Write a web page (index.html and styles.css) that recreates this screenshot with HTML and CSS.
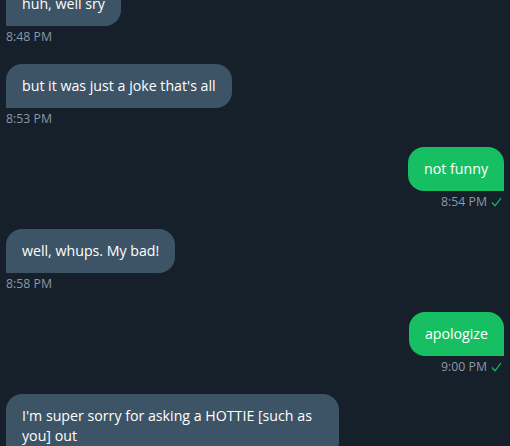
FILE: index.html
```html
<!DOCTYPE html>
<html lang="en">
<head>
<meta charset="utf-8">
<title>Messages</title>
<link rel="stylesheet" href="styles.css">
</head>
<body>
<main class="thread">
  <div class="msg in">
    <div class="bubble">huh, well sry</div>
    <div class="meta">8:48 PM</div>
  </div>
  <div class="msg in">
    <div class="bubble">but it was just a joke that's all</div>
    <div class="meta">8:53 PM</div>
  </div>
  <div class="msg out">
    <div class="bubble">not funny</div>
    <div class="meta">8:54 PM <svg class="check" width="11" height="10" viewBox="0 0 11 10"><polyline points="1,5.5 4,8.8 10,1" fill="none" stroke="#17bf63" stroke-width="1.2"/></svg></div>
  </div>
  <div class="msg in">
    <div class="bubble">well, whups. My bad!</div>
    <div class="meta">8:58 PM</div>
  </div>
  <div class="msg out">
    <div class="bubble">apologize</div>
    <div class="meta">9:00 PM <svg class="check" width="11" height="10" viewBox="0 0 11 10"><polyline points="1,5.5 4,8.8 10,1" fill="none" stroke="#17bf63" stroke-width="1.2"/></svg></div>
  </div>
  <div class="msg in">
    <div class="bubble">I'm super sorry for asking a HOTTIE [such as you] out</div>
  </div>
</main>
</body>
</html>
```
FILE: styles.css
```css
html, body {
  margin: 0;
  padding: 0;
  background: #16202a;
  overflow: hidden;
}
body {
  font-family: "Open Sans", "Noto Sans", sans-serif;
  color: #ffffff;
}
.thread {
  display: flex;
  flex-direction: column;
  padding: 0 6px;
  margin-top: -18.5px;
}
.msg {
  display: flex;
  flex-direction: column;
  margin-bottom: 19.5px;
}
.msg.in { align-items: flex-start; }
.msg.out { align-items: flex-end; }
.bubble {
  max-width: 301px;
  padding: 12px 16px;
  font-size: 14.2px;
  line-height: 20px;
  border-radius: 16px;
}
.in .bubble {
  background: #3d5466;
  border-bottom-left-radius: 0;
}
.out .bubble {
  background: #17bf63;
  border-bottom-right-radius: 0;
}
.meta {
  margin-top: 3px;
  font-size: 12.3px;
  line-height: 16px;
  color: #8899a6;
  display: flex;
  align-items: center;
  gap: 4px;
}
.out .meta { margin-right: 2px; }
.check { display: block; }
```
